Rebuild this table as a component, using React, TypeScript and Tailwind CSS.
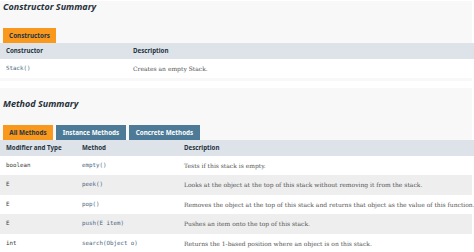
import React from 'react';

const sans = { fontFamily: '"Noto Sans", "DejaVu Sans", sans-serif' };

type Row = { type: string; method: string; desc: string };

const METHODS: Row[] = [
  { type: 'boolean', method: 'empty()', desc: 'Tests if this stack is empty.' },
  { type: 'E', method: 'peek()', desc: 'Looks at the object at the top of this stack without removing it from the stack.' },
  { type: 'E', method: 'pop()', desc: 'Removes the object at the top of this stack and returns that object as the value of this function.' },
  { type: 'E', method: 'push(E item)', desc: 'Pushes an item onto the top of this stack.' },
  { type: 'int', method: 'search(Object o)', desc: 'Returns the 1-based position where an object is on this stack.' },
];

const Title: React.FC<{ children: React.ReactNode }> = ({ children }) => (
  <h3
    className="pl-[3px] text-[9px] leading-[12px] font-bold italic text-[#27313a]"
    style={sans}
  >
    {children}
  </h3>
);

const App: React.FC = () => {
  return (
    <div className="w-[474px] h-[252px] overflow-hidden bg-white">
      {/* constructor summary */}
      <section className="w-[472px] mt-px bg-[#f8f8f8] pb-[3px]">
        <Title>Constructor Summary</Title>
        <div className="pt-[15px] pl-[3px] flex">
          <div
            className="h-[15px] w-[53px] flex items-center justify-center bg-[#f8981d] text-[6.3px] font-bold text-[#253441]"
            style={sans}
          >
            Constructors
          </div>
        </div>
        <div
          className="w-[474px] h-[16px] grid grid-cols-[127px_1fr] items-center pl-[6px] bg-[#dee3e9] text-[6.2px] font-bold text-[#253441]"
          style={sans}
        >
          <span>Constructor</span>
          <span>Description</span>
        </div>
        <div className="h-[19px] grid grid-cols-[127px_1fr] items-center pl-[6px] bg-white">
          <span className="font-['DejaVu_Sans_Mono',monospace] text-[5.8px] text-[#4a6782]">Stack()</span>
          <span className="font-['DejaVu_Serif',serif] text-[6px] text-[#555555]">Creates an empty Stack.</span>
        </div>
      </section>

      {/* method summary */}
      <section className="w-[472px] mt-[7px] bg-[#f8f8f8] pt-[10px]">
        <Title>Method Summary</Title>
        <div className="pt-[15px] pl-[3px] flex gap-[3px]">
          <div
            className="h-[15px] w-[50px] flex items-center justify-center bg-[#f8981d] text-[6.3px] font-bold text-[#253441]"
            style={sans}
          >
            All Methods
          </div>
          <div
            className="h-[15px] w-[70px] flex items-center justify-center bg-[#4d7a97] text-[6.3px] font-bold text-white"
            style={sans}
          >
            Instance Methods
          </div>
          <div
            className="h-[15px] w-[71px] flex items-center justify-center bg-[#4d7a97] text-[6.3px] font-bold text-white"
            style={sans}
          >
            Concrete Methods
          </div>
        </div>
        <div
          className="w-[474px] h-[15.5px] grid grid-cols-[76px_102px_1fr] items-center pl-[6px] bg-[#dee3e9] text-[6.2px] font-bold text-[#253441]"
          style={sans}
        >
          <span>Modifier and Type</span>
          <span>Method</span>
          <span>Description</span>
        </div>
        {METHODS.map((m, i) => (
          <div
            key={m.method}
            className={`h-[19.5px] grid grid-cols-[76px_102px_1fr] items-center pl-[6px] ${i % 2 === 1 ? 'bg-[#eeeeef]' : 'bg-white'}`}
          >
            <span className="font-['DejaVu_Sans_Mono',monospace] text-[5.8px] text-[#353833]">{m.type}</span>
            <span className="font-['DejaVu_Sans_Mono',monospace] text-[5.8px] text-[#4a6782]">{m.method}</span>
            <span className="font-['DejaVu_Serif',serif] text-[6px] text-[#555555] whitespace-nowrap">{m.desc}</span>
          </div>
        ))}
      </section>
    </div>
  );
};

export default App;
